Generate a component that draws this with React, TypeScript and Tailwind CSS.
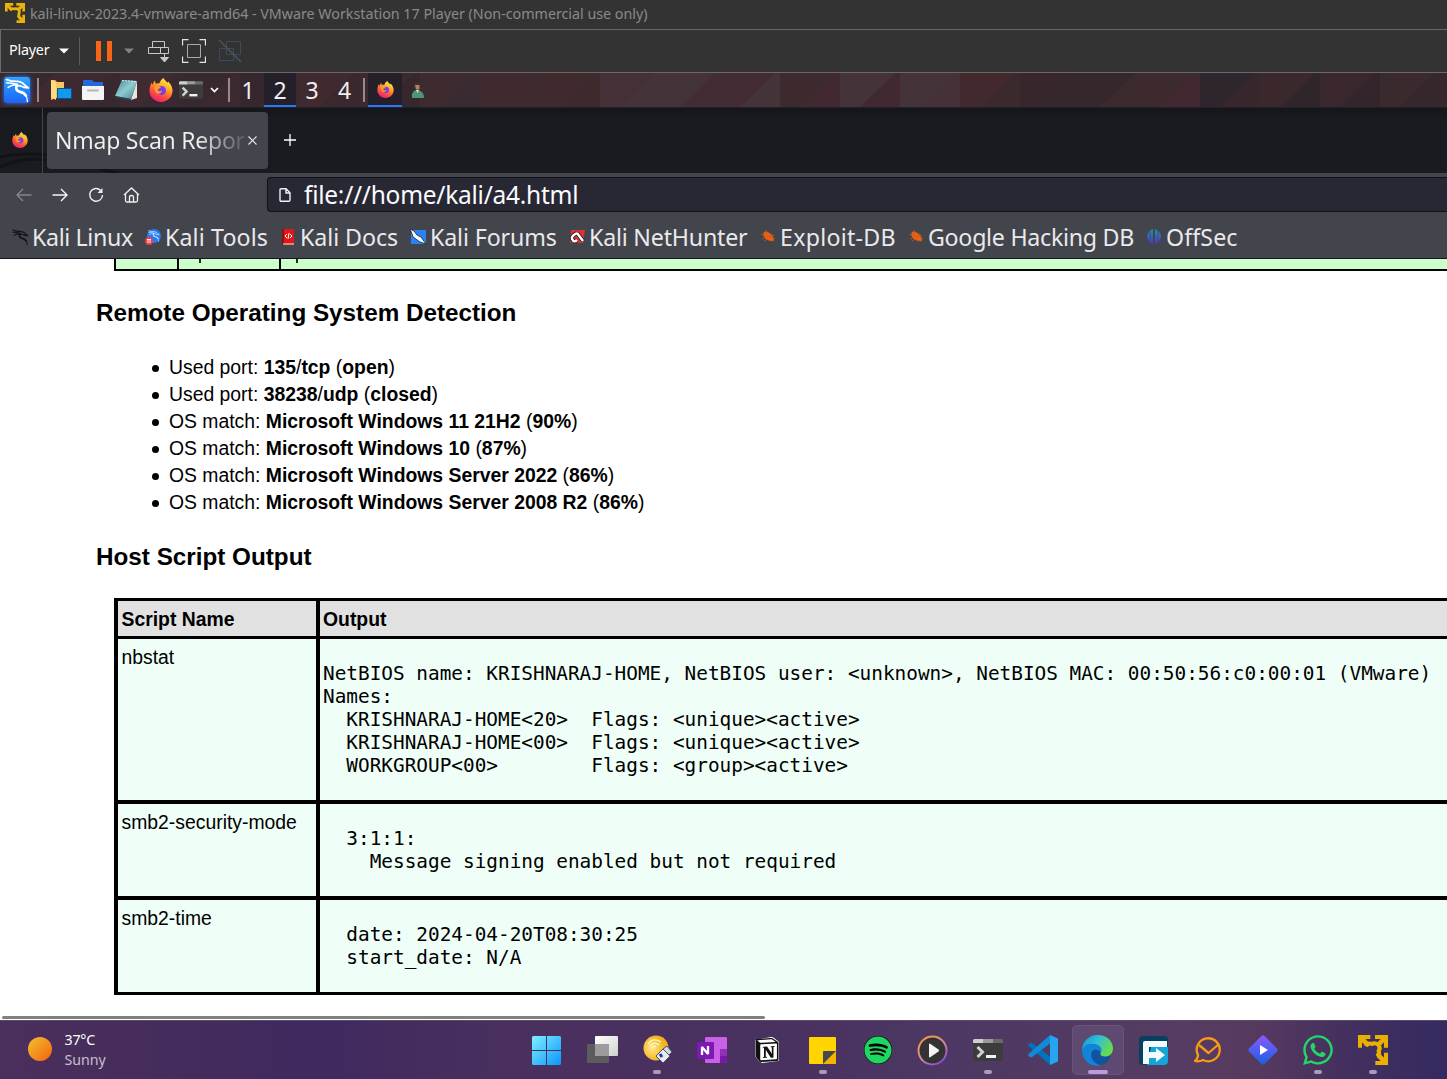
import React from "react";
import { SiNotion } from "react-icons/si";
import { FaSpotify, FaWhatsapp } from "react-icons/fa";

const UI = "font-['Noto_Sans',sans-serif]";
const SANS = "font-['Liberation_Sans',Arial,sans-serif]";

const stripes: [string, string][] = [
  ["#37282f", "#40292f"], ["#3d2a30", "#382930"], ["#3f2b31", "#3a2931"], ["#38282f", "#3d2930"],
  ["#35272d", "#3c2a30"], ["#402a30", "#39292f"], ["#3c2a30", "#36272e"], ["#3d2b30", "#3a2a32"],
  ["#40292f", "#3e2a2f"], ["#412a2e", "#3e292d"], ["#443036", "#443338"], ["#443338", "#432c33"],
  ["#432c33", "#443338"], ["#3c2a2f", "#422931"], ["#443338", "#422931"], ["#443338", "#453137"],
  ["#42292d", "#3b292d"], ["#37272d", "#36272d"], ["#36272d", "#3d2a2f"], ["#3d2a2f", "#422931"],
  ["#2f252d", "#37272d"], ["#3b282d", "#2f252a"], ["#3a272e", "#32262c"], ["#3a292d", "#35272c"],
  ["#38282d", "#38282d"],
];

function PanelBackdrop() {
  return (
    <svg className="absolute inset-0" width="1447" height="34" aria-hidden="true">
      {stripes.map(([a, b], i) => (
        <g key={i} transform={`translate(${i * 60} 0)`}>
          <rect width="60" height="34" fill={a} />
          <path d="M55 0H60V34H20Z" fill={b} />
        </g>
      ))}
    </svg>
  );
}

function Dragon({ size, color }: { size: number; color: string }) {
  return (
    <svg width={size} height={size} viewBox="0 0 24 24" fill="none" stroke={color} strokeLinecap="round" strokeLinejoin="round">
      <path d="M1.500 1.500Q7 3.500 12 3.300Q17 4 19 7L22.500 9.500L18 9Q15 7 11.500 7.500" strokeWidth="1.700" />
      <path d="M1.500 4.500Q7 4.500 11 6M3 9Q6.500 6.500 10.500 6.500" strokeWidth="1.500" />
      <path d="M11.500 6.500Q9 12 14.500 13.300Q18.500 14 20 17" strokeWidth="2.600" />
      <path d="M19.500 16Q21.500 18.500 21.500 22.500" strokeWidth="1.400" />
    </svg>
  );
}

function VmwareIcon({ size, color }: { size: number; color: string }) {
  return (
    <svg width={size} height={size} viewBox="0 0 90 90" fill="none" stroke={color} strokeWidth="12">
      <path d="M37 6H6V38M51 6H84V38M84 53V84H52" />
      <path d="M4 4L27 27M86 4L62 28M86 86L62 62" strokeWidth="14" />
      <path d="M24 34Q30 22 42 27Q50 22 60 29Q69 38 62 48Q66 58 56 64" strokeWidth="12" />
    </svg>
  );
}

function Firefox({ size }: { size: number }) {
  return (
    <svg width={size} height={size} viewBox="0 0 24 24">
      <defs>
        <linearGradient id="ffx" x1="0.8" y1="0" x2="0.3" y2="1">
          <stop offset="0" stopColor="#fff14a" />
          <stop offset="0.35" stopColor="#ffb02a" />
          <stop offset="0.65" stopColor="#ff5a32" />
          <stop offset="1" stopColor="#f0187a" />
        </linearGradient>
      </defs>
      <path d="M14.500 0c1.200 2.200 2.500 3 4 4.800l.8-1.300c3.200 3.400 4.200 6.500 4.200 9.300C23.500 19.300 18.300 24 12 24S.5 19.300.5 12.800C.5 9.500 1.500 6.500 2.800 4.400l.4 2.500C4.200 5.300 5 4 6 2.600l.6 3.200c1.400-.7 2.600-.8 3.800-.5C11.200 3.200 12.500 1 14.500 0Z" fill="url(#ffx)" />
      <circle cx="12.500" cy="12.500" r="4.500" fill="#7a3fe0" />
      <path d="M5.500 8.500c2.500-1.300 5-.6 6.500.8-1 1.400-3 1.300-3.500 2.700 1.200 2 3.300 1.300 4.500.3-.2 3-3.400 4.300-5.500 2.700C5.800 13.500 5.300 11 5.500 8.500Z" fill="#ff9a28" />
    </svg>
  );
}

function Terminal({ w, h }: { w: number; h: number }) {
  return (
    <svg width={w} height={h} viewBox="0 0 30 22">
      <path d="M0 1.500Q0 0 1.500 0H28.500Q30 0 30 1.500V20.500Q30 22 28.500 22H1.500Q0 22 0 20.500Z" fill="#3c3c3c" />
      <path d="M0 4V1.500Q0 0 1.500 0H10V4Z" fill="#cfcfcf" />
      <path d="M10 0H20V4H10Z" fill="#9b9b9b" />
      <path d="M20 0H28.500Q30 0 30 1.500V4H20Z" fill="#6b6b6b" />
      <path d="M4.500 8L9.500 13L4.500 18" fill="none" stroke="#d2d2d2" strokeWidth="3" />
      <path d="M13 16H23V19H13Z" fill="#f2f2f2" />
    </svg>
  );
}

function PlayerBar() {
  return (
    <div className="flex h-[44px] items-center border-y border-l border-[#696969] bg-[#333333] text-white">
      <span className={`${UI} mb-[2px] ml-2 w-[42px] text-[14.300px] tracking-[-0.2px]`}>Player</span>
      <svg className="ml-[8px]" width="10" height="6"><path d="M0 .5H10L5 5.500Z" fill="#fff" /></svg>
      <div className="ml-[10px] h-7 w-px bg-[#5a5a5a]" />
      <div className="ml-[16px] flex gap-[6px]">
        <div className="h-[20px] w-[5px] bg-[#fb6417]" />
        <div className="h-[20px] w-[5px] bg-[#fb6417]" />
      </div>
      <svg className="ml-[12px]" width="10" height="6"><path d="M0 .5H10L5 5.500Z" fill="#848484" /></svg>
      <svg className="ml-[14px]" width="22" height="23" fill="none" stroke="#c8c8c8">
        <path d="M4.500 1.500H16.500V7.500H4.500ZM.5 7.500H12.500V13.500H.5ZM12.500 7.500H20.500V13.500H12.500" />
        <path d="M16.500 14V21M12.500 17.500H20.500L16.500 22Z" fill="#c8c8c8" />
      </svg>
      <svg className="ml-[12px]" width="24" height="24" fill="none" stroke="#e5e5e5">
        <path d="M6.500 .5H.5V6.500M17.500 .5H23.500V6.500M6.500 23.500H.5V17.500M17.500 23.500H23.500V17.500" strokeWidth="1.300" />
        <path d="M5.500 5.500H18.500V18.500H5.500Z" stroke="#a9a9a9" />
      </svg>
      <svg className="ml-[12px]" width="24" height="24" fill="none" stroke="#3c4b58">
        <path d="M8.500 2.500H22.500V15.500H8.500ZM1.500 9.500H15.500V21.500H1.500Z" />
        <path d="M1 1L23 23" stroke="#475562" strokeWidth="1.500" />
      </svg>
    </div>
  );
}

function Separator({ cls }: { cls: string }) {
  return <div className={`h-6 w-[2px] shrink-0 bg-[#99898e] ${cls}`} />;
}

function KaliPanel() {
  return (
    <div className="relative h-[34px] overflow-hidden bg-[#3b2a31]">
      <PanelBackdrop />
      <div className="relative flex h-full items-center">
        <div className="ml-[4px] flex h-[26px] w-[26px] shrink-0 items-center justify-center rounded-[3px] bg-linear-to-b from-[#31a4ff] to-[#1f63f5] shadow-[0_0_4px_#2878ff]">
          <Dragon size={25} color="#fff" />
        </div>
        <Separator cls="ml-[7px]" />
        <svg className="ml-[12px] shrink-0" width="22" height="22">
          <path d="M0 1H4L6 3H13V19H5L0 21Z" fill="#f9c85d" />
          <path d="M0 1L5 4V21L0 18Z" fill="#ffdc83" />
          <path d="M6.500 9.500H20.500V19.500H6.500Z" fill="#1099ee" stroke="#075392" />
        </svg>
        <svg className="ml-[8px] shrink-0" width="24" height="22">
          <path d="M2 9V2Q2 1 3 1H11L13 3H21Q22 3 22 4V9Z" fill="#2669dc" />
          <path d="M1 7H23V20Q23 21 22 21H2Q1 21 1 20Z" fill="#f4f4f4" />
          <path d="M7 11.500H17" stroke="#b5b5b5" strokeWidth="2" strokeLinecap="round" />
        </svg>
        <svg className="ml-[9px] shrink-0" width="25" height="24">
          <defs><linearGradient id="note" x2="1" y2="1"><stop stopColor="#3f8894" /><stop offset=".5" stopColor="#90cbd2" /><stop offset="1" stopColor="#427f8c" /></linearGradient></defs>
          <path d="M8 2L23 3L17 21L1 18Z" fill="url(#note)" />
          <path d="M23 3V20L17 22Z" fill="#e6e6de" />
          <path d="M1 18L17 21V23L2 20Z" fill="#28444b" />
          <path d="M8 2.500L22 3.500" stroke="#d8ebe9" strokeDasharray="2 1" />
        </svg>
        <div className="ml-[10px] shrink-0"><Firefox size={24} /></div>
        <div className="ml-[6px] shrink-0"><Terminal w={24} h={18} /></div>
        <svg className="ml-[7px] shrink-0" width="9" height="6" fill="none" stroke="#fff" strokeWidth="1.700"><path d="M1 1L4.500 4.500L8 1" /></svg>
        <Separator cls="ml-[9px]" />
        <div className={`${UI} ml-[2px] flex h-full text-[23px] leading-[34px] text-[#f0eef0]`}>
          <span className="w-[32px] text-center">1</span>
          <span className="w-[32px] border-b-2 border-[#2777ff] bg-[#251f2a] text-center">2</span>
          <span className="w-[32px] text-center">3</span>
          <span className="w-[33px] text-center">4</span>
        </div>
        <Separator cls="ml-[2px]" />
        <div className="ml-[3px] flex h-full w-[34px] items-center justify-center border-b-2 border-[#2777ff] bg-[#251f2a]"><Firefox size={17} /></div>
        <svg className="ml-[9px]" width="14" height="17">
          <circle cx="6.500" cy="4" r="3.800" fill="#3b302b" /><path d="M4 3H8.500V7.500H5Z" fill="#b18161" />
          <path d="M1 16Q0 8 6.500 8Q13 9 13 16Z" fill="#519376" /><path d="M5 8H8L6.500 11Z" fill="#dce5df" />
        </svg>
      </div>
    </div>
  );
}

function TabBar() {
  return (
    <div className="relative flex h-[66px] border-t border-[#202227] bg-linear-to-b from-[#15161a] via-[#1a1b20] via-20% to-[#1a1b20]">
      <svg className="absolute bottom-0 left-0" width="120" height="22" fill="none" stroke="#121317" strokeWidth="3">
        <path d="M0 6Q25 1 46 4M0 16Q25 5 46 9M100 18L118 22" />
      </svg>
      <div className="relative flex w-[43px] items-center border-r border-[#44464c]">
        <div className="mb-[2px] ml-[12px]"><Firefox size={16} /></div>
      </div>
      <div className="relative ml-[4px] mt-[4px] flex h-[57px] w-[221px] items-center rounded-[4px] bg-[#43454c]">
        <span className={`${UI} mb-[2px] ml-[8px] w-[189px] whitespace-nowrap bg-linear-to-r from-[#f0f0f0] from-75% to-[#5a5c62] bg-clip-text text-[23px] leading-[36px] tracking-[-0.25px] text-transparent`}>Nmap Scan Repor</span>
        <svg className="ml-[4px]" width="9" height="9" stroke="#e8e8e8" strokeWidth="1.100"><path d="M.5 .5L8.500 8.500M8.500 .5L.5 8.500" /></svg>
      </div>
      <svg className="ml-[16px] mt-[26px]" width="12" height="12" stroke="#fff" strokeWidth="1.300"><path d="M6 0V12M0 6H12" /></svg>
    </div>
  );
}

function NavBar() {
  return (
    <div className="flex h-[43px] items-center bg-[#43454c]">
      <svg className="ml-[16px]" width="16" height="14" fill="none" stroke="#85878b" strokeWidth="1.300"><path d="M15.500 7H1.500M7 1L1 7L7 13" /></svg>
      <svg className="ml-[20px]" width="16" height="14" fill="none" stroke="#f5f5f5" strokeWidth="1.400"><path d="M.5 7H14.500M9 1L15 7L9 13" /></svg>
      <svg className="ml-[20px]" width="16" height="16" fill="none" stroke="#f0f0f0" strokeWidth="1.400"><path d="M12.500 3.200A6.400 6.400 0 1 0 14.500 8" /><path d="M14.500 1V6H9.500Z" fill="#f0f0f0" stroke="none" /></svg>
      <svg className="ml-[19px]" width="17" height="16" fill="none" stroke="#f0f0f0" strokeWidth="1.300"><path d="M1 8L8.500 1L16 8M2.500 7V13.500Q2.500 15 4 15H13Q14.500 15 14.500 13.500V7M6.500 15V10Q6.500 8.500 8.500 8.500T10.500 10V15" /></svg>
      <div className="ml-[127px] flex h-[35px] flex-1 items-center rounded-l-[4px] border border-r-0 border-[#101117] bg-[#272834]">
        <svg className="ml-[11px]" width="12" height="14" fill="none" stroke="#f0f0f0" strokeWidth="1.400"><path d="M1 2Q1 .8 2.200 .8H7L11 4.800V12Q11 13.200 9.800 13.200H2.200Q1 13.200 1 12ZM7 1V5H11" /></svg>
        <span className={`${UI} ml-[13px] whitespace-nowrap text-[24.500px] leading-[33px] tracking-[-0.26px] text-[#fbfbfe]`}>file:///home/kali/a4.html</span>
      </div>
    </div>
  );
}

function Bug() {
  return (
    <svg width="16" height="16" fill="#ec6213" stroke="#d45a18" strokeWidth=".7">
      <path d="M4 3Q9 2 13 8L13.500 12Q8 12 5 9Q3 7 4 3Z" /><path d="M1 5L15 10M2 10L12 5M6 1L7 6M4 12L9 9M14 6L9 8" fill="none" />
    </svg>
  );
}

const bookmarks: { label: string; gap: string; text: string; icon: React.ReactNode }[] = [
  { label: "Kali Linux", gap: "ml-[12px]", text: "w-[101px] tracking-[-0.36px]", icon: <Dragon size={17} color="#131416" /> },
  {
    label: "Kali Tools", gap: "ml-[12px]", text: "w-[103px] tracking-[0.13px]",
    icon: <span className="relative block h-4 w-4"><span className="ml-[2px] flex h-[14px] w-[14px] items-center justify-center rounded-full bg-[#267bf4]"><Dragon size={12} color="#b8dcff" /></span><svg className="absolute bottom-0 left-0" width="8" height="8"><circle cx="4" cy="4" r="4" fill="#f23c42" /><path d="M2 2.500H6M3 3V6M5 3V6" stroke="#fff" /></svg></span>,
  },
  { label: "Kali Docs", gap: "ml-[12px]", text: "w-[97px] tracking-[-0.05px]", icon: <svg width="16" height="16"><path d="M2 0H14V16H2Z" fill="#de1719" /><path d="M2 0H4V16H2Z" fill="#8e1114" /><path d="M3 15H14" stroke="#eee" /><path d="M7 5L5 7L7 9M10 5L12 7L10 9M9 4L8 10" fill="none" stroke="#fff" /></svg> },
  { label: "Kali Forums", gap: "ml-[13px]", text: "w-[127px] tracking-[-0.12px]", icon: <svg width="16" height="16"><path d="M1 1H16V15H1Z" fill="#2882f8" /><path d="M0 0L4 2L7 6L11 8L16 15L10 13L3 8L2 5Z" fill="#f6f6f6" stroke="#17212e" strokeWidth=".8" /></svg> },
  { label: "Kali NetHunter", gap: "ml-[12px]", text: "w-[159px] tracking-[-0.2px]", icon: <svg width="16" height="16"><path d="M2 1H16L14 14H1Z" fill="#df3035" /><path d="M8 4Q2 7 3 10Q5 14 8 11M8 4L14 12" fill="none" stroke="#17181b" strokeWidth="4" /><path d="M8 4Q2 7 3 10Q5 14 8 11M8 4L14 12" fill="none" stroke="#fff" strokeWidth="2.500" /></svg> },
  { label: "Exploit-DB", gap: "ml-[12px]", text: "w-[117px] tracking-[0.25px]", icon: <Bug /> },
  { label: "Google Hacking DB", gap: "ml-[11px]", text: "w-[208px] tracking-[-0.27px]", icon: <Bug /> },
  { label: "OffSec", gap: "ml-[10px]", text: "w-[80px] tracking-[0.1px]", icon: <svg width="16" height="16"><defs><linearGradient id="ofs" y2="1" x2="0"><stop stopColor="#19989f" /><stop offset="1" stopColor="#5631cf" /></linearGradient></defs><path d="M7 0V15Q1 12 1 7Q2 2 7 0ZM9 0Q15 3 15 8Q14 13 9 15Z" fill="url(#ofs)" /><path d="M4 2V12M12 2V12" stroke="#43454c" strokeWidth=".7" /></svg> },
];

function BookmarksBar() {
  return (
    <div className="flex h-[43px] items-start overflow-hidden border-b border-[#15161a] bg-[#43454c]">
      {bookmarks.map((b) => (
        <div key={b.label} className={`flex h-[42px] shrink-0 items-center ${b.gap}`}>
          <div className="w-4 shrink-0">{b.icon}</div>
          <span className={`${UI} ${b.text} ml-[4px] whitespace-nowrap text-[23.200px] leading-[40px] text-[#e9e9eb]`}>{b.label}</span>
        </div>
      ))}
    </div>
  );
}

const osFacts = [
  ["Used port: ", "135/tcp", "open"],
  ["Used port: ", "38238/udp", "closed"],
  ["OS match: ", "Microsoft Windows 11 21H2", "90%"],
  ["OS match: ", "Microsoft Windows 10", "87%"],
  ["OS match: ", "Microsoft Windows Server 2022", "86%"],
  ["OS match: ", "Microsoft Windows Server 2008 R2", "86%"],
];

const scripts = [
  {
    name: "nbstat", height: "h-[165px]", border: "border-b-4",
    output: `NetBIOS name: KRISHNARAJ-HOME, NetBIOS user: <unknown>, NetBIOS MAC: 00:50:56:c0:00:01 (VMware)
Names:
  KRISHNARAJ-HOME<20>  Flags: <unique><active>
  KRISHNARAJ-HOME<00>  Flags: <unique><active>
  WORKGROUP<00>        Flags: <group><active>`,
  },
  { name: "smb2-security-mode", height: "h-[96px]", border: "border-b-4", output: "  3:1:1:\n    Message signing enabled but not required" },
  { name: "smb2-time", height: "h-[95px]", border: "border-b-[3px]", output: "  date: 2024-04-20T08:30:25\n  start_date: N/A" },
];

function Report() {
  return (
    <div className={`${SANS} flex h-[761px] flex-col overflow-hidden bg-white text-[19.380px] text-black`}>
      <div className="ml-[114px] flex h-[12px] shrink-0 border-b-2 border-l-2 border-black bg-[#ccffcc]">
        <div className="w-[63px] border-r-2 border-black" />
        <div className="w-[102px] border-r-2 border-black pl-[20px]"><div className="h-[4px] w-[2px] bg-[#24301f]" /></div>
        <div className="pl-[15px]"><div className="h-[4px] w-[2px] bg-[#24301f]" /></div>
      </div>
      <h2 className="ml-[96px] mt-[27px] text-[24.250px] font-bold leading-[30px]">Remote Operating System Detection</h2>
      <ul className="ml-[152px] mt-[26px]">
        {osFacts.map(([label, value, note]) => {
          const [head, tail] = value.split("/");
          return (
            <li key={value} className="flex h-[27px] items-center whitespace-pre">
              <span className="mr-[10px] mt-[2px] h-[7px] w-[7px] rounded-full bg-black" />
              <span>{label}<b>{head}</b>{tail && <>/<b>{tail}</b></>} (<b>{note}</b>)</span>
            </li>
          );
        })}
      </ul>
      <h2 className="ml-[96px] mt-[26px] text-[24.250px] font-bold leading-[30px]">Host Script Output</h2>
      <div className="ml-[114px] mt-[26px] border-l-4 border-t-[3px] border-black">
        <div className="flex h-[38px] border-b-[3px] border-black bg-[#e1e1e1] font-bold leading-[37px]">
          <div className="w-[202px] shrink-0 border-r-4 border-black pl-[3.500px]">Script Name</div>
          <div className="pl-[3px]">Output</div>
        </div>
        {scripts.map((s) => (
          <div key={s.name} className={`flex border-black bg-[#effff7] ${s.height} ${s.border}`}>
            <div className="w-[202px] shrink-0 border-r-4 border-black pl-[3.500px] pt-[5px] leading-[27px]">{s.name}</div>
            <pre className="pl-[3px] pt-[23px] font-['DejaVu_Sans_Mono',monospace] text-[19.390px] leading-[23px]">{s.output}</pre>
          </div>
        ))}
      </div>
      <div className="ml-[2px] mt-[21px] h-[3px] w-[763px] shrink-0 rounded-full bg-[#7d8281]" />
    </div>
  );
}

const apps: { name: string; mark?: "dot" | "active"; icon: React.ReactNode }[] = [
  { name: "Start", icon: <svg width="30" height="30"><defs><linearGradient id="win" x2="1" y2="1"><stop stopColor="#7cf0ff" /><stop offset="1" stopColor="#0d95fb" /></linearGradient></defs><path d="M1 1H14V15H0V2ZM15 1H28L29 2V15H15ZM0 16H14V30H1L0 29ZM15 16H29V29L28 30H15Z" fill="url(#win)" /></svg> },
  { name: "Task View", icon: <svg width="32" height="30"><defs><linearGradient id="tv" x2="1" y2="1"><stop stopColor="#fff" /><stop offset="1" stopColor="#d0d0d0" /></linearGradient></defs><rect x="1" y="9" width="22" height="19" rx="1" fill="#5c5b5d" /><rect x="9" y="1" width="23" height="20" rx="1" fill="url(#tv)" /><path d="M9 9H23V21H10L9 20Z" fill="#9d9b9e" /></svg> },
  { name: "Rufus", mark: "dot", icon: <svg width="30" height="30"><defs><radialGradient id="ruf" cx=".35" cy=".5"><stop stopColor="#ffe98c" /><stop offset="1" stopColor="#f2b41b" /></radialGradient></defs><circle cx="14" cy="13" r="12.500" fill="url(#ruf)" /><path d="M6 9Q11 2 19 7M8 11Q12 6 17 10M10 13Q12 10 14 12" fill="none" stroke="#fff5cc" strokeWidth="1.300" /><path d="M14 21L21 14L28 21L21 28Z" fill="#e8ebf0" stroke="#47516b" /><path d="M21 14L25 11L30 17L27 20Z" fill="#d4d8df" stroke="#47516b" /><path d="M18 19L20 22" stroke="#2638a7" strokeWidth="3" /></svg> },
  { name: "OneNote", icon: <svg width="30" height="30"><rect x="8" y="2" width="22" height="26" rx="1" fill="#c861e6" /><path d="M23 14H30V21H23Z" fill="#9131b9" /><path d="M23 21H30V27L29 28H23Z" fill="#7719aa" /><rect y="7" width="17" height="17" rx="1" fill="#7c18b4" /><path d="M5 20V12L11 19V11" fill="none" stroke="#fff" strokeWidth="2.300" strokeLinejoin="bevel" /></svg> },
  { name: "Notion", icon: <svg width="26" height="28" viewBox="0 0 26 28"><path d="M1 4L17 1Q19 1 20 2L25 6V24Q25 25 24 25L8 27L5 25L1 20Z" fill="#fff" /><g transform="translate(1 2)"><SiNotion size={24} color="#111" /></g></svg> },
  { name: "Sticky Notes", mark: "dot", icon: <svg width="27" height="27"><rect width="27" height="27" rx="1" fill="#ffd400" /><path d="M14 14H27V27H14Z" fill="#f5b300" /><path d="M14 27V15Q14 14 15 14H27Z" fill="#484848" /></svg> },
  { name: "Spotify", icon: <span className="flex rounded-full bg-black"><FaSpotify size={28} color="#1ed760" /></span> },
  { name: "Media Player", icon: <svg width="31" height="31"><defs><linearGradient id="mp" x2=".7" y2="1"><stop stopColor="#ff9c35" /><stop offset=".6" stopColor="#d28a9a" /><stop offset="1" stopColor="#8d4bd0" /></linearGradient></defs><circle cx="15.500" cy="15.500" r="14" fill="#333335" stroke="url(#mp)" strokeWidth="2" /><path d="M12 9.500Q12 8 13.500 9L21.500 14.500Q22.500 15.500 21.500 16.500L13.500 22Q12 23 12 21.500Z" fill="#f4f4f4" /></svg> },
  { name: "Terminal", mark: "dot", icon: <Terminal w={30} h={22} /> },
  { name: "VS Code", icon: <svg width="30" height="30" viewBox="0 0 30 30"><path d="M1 8.500L3.500 7.500L22 21.500V30L.5 11Q-.3 9.800 1 8.500Z" fill="#0073bd" /><path d="M1 21.500L3.500 22.500L22 8.500V0L.5 19Q-.3 20.200 1 21.500Z" fill="#0f8bd9" /><path d="M22 0L30 3.500V26.500L22 30Z" fill="#26a5ef" /></svg> },
  { name: "Edge", mark: "active", icon: <svg width="31" height="31" viewBox="0 0 30 30"><defs><linearGradient id="ed1" x2="1" y2=".5"><stop stopColor="#1493d7" /><stop offset=".5" stopColor="#30bfd6" /><stop offset="1" stopColor="#69dc4c" /></linearGradient></defs><path d="M15 0C24 0 30 6 30 13C30 18 26 21 22 21C18 21 17 19 18 17C20 15 18 10 12 9C6 8 1 12 0 15C0 6 7 0 15 0Z" fill="url(#ed1)" /><path d="M0 15C1 10 7 7 13 9C18 10 20 14 18 17C16 14 11 15 11 20C11 25 15 29 19 29C8 32 0 24 0 15Z" fill="#1184d9" /><path d="M9 18C10 13 15 13 18 17C17 19 18 21 22 21C25 21 27 20 28 20C26 26 21 29 18 29C12 28 8 23 9 18Z" fill="#11539d" /></svg> },
  { name: "Downloader", icon: <svg width="29" height="29"><rect width="29" height="29" rx="4" fill="#07415f" /><path d="M12 11H29V25Q29 29 25 29H8Z" fill="#13a5d8" /><path d="M4 28V7Q4 5 6 5H28V11H10V16H17V12L26 19L17 26V22H10V28Z" fill="#f4fbff" /></svg> },
  { name: "eM Client", icon: <svg width="28" height="27" fill="none" stroke="#f99a17" strokeWidth="2.300" strokeLinejoin="round"><path d="M4 18A11.500 11.500 0 1 1 9 23Q5 25 1 24Q4 22 4 18Z" /><path d="M5 8L14.500 16L25 7" /></svg> },
  { name: "Streamer", icon: <svg width="30" height="30"><defs><linearGradient id="st" x2="0" y2="1"><stop stopColor="#8a5aff" /><stop offset="1" stopColor="#1660df" /></linearGradient></defs><path d="M13.500 1Q15 -.5 16.500 1L29 13.500Q30.500 15 29 16.500L16.500 29Q15 30.500 13.500 29L1 16.500Q-.5 15 1 13.500Z" fill="url(#st)" /><path d="M12 10L20 15L12 20Z" fill="#fff" /></svg> },
  { name: "WhatsApp", mark: "dot", icon: <FaWhatsapp size={34} color="#25d366" /> },
  { name: "VMware", mark: "dot", icon: <VmwareIcon size={30} color="#e8b000" /> },
];

function Taskbar() {
  return (
    <div className="relative flex h-[59px] border-t border-[#5a4b67] bg-[linear-gradient(90deg,#4b2f5c_0%,#442c5c_12%,#40295f_22%,#49305e_36%,#493160_55%,#4c3863_65%,#563c62_82%,#57395f_87%,#43305f_93%,#352a60_100%)]">
      <div className={`${UI} flex w-[519.500px] items-start pt-[8px]`}>
        <div className="ml-[28px] mt-[8px] h-[24px] w-[24px] rounded-full bg-linear-to-br from-[#efbf30] to-[#f2600d]" />
        <div className="ml-[12.500px] mt-px text-[14.200px] leading-[20px] tracking-[-0.05px]">
          <div className="tracking-[-0.2px] text-white">37°C</div>
          <div className="text-[#c9bfd0]">Sunny</div>
        </div>
      </div>
      {apps.map((a) => (
        <div key={a.name} className="relative flex h-[58px] w-[55.100px] shrink-0 items-center justify-center">
          {a.mark === "active" && <div className="absolute inset-x-[2px] top-[4px] h-[50px] rounded-[5px] border border-[#69547a] bg-[#5e4a70]" />}
          <div className="relative">{a.icon}</div>
          {a.mark === "dot" && <div className="absolute bottom-[5px] h-[4px] w-[8px] rounded-full bg-[#ac9cb3]" />}
          {a.mark === "active" && <div className="absolute bottom-[5px] h-[4px] w-[20px] rounded-full bg-[#be9ade]" />}
        </div>
      ))}
    </div>
  );
}

export default function App() {
  return (
    <div className="flex h-[1079px] w-[1447px] flex-col overflow-hidden bg-white">
      <div className="flex h-[29px] items-center bg-[#333333]">
        <div className="mb-[3px] ml-[5px]"><VmwareIcon size={20} color="#eab308" /></div>
        <span className={`${UI} mb-[1px] ml-[5px] whitespace-nowrap text-[14.300px] tracking-[-0.02px] text-[#8a8a8a]`}>kali-linux-2023.4-vmware-amd64 - VMware Workstation 17 Player (Non-commercial use only)</span>
      </div>
      <PlayerBar />
      <KaliPanel />
      <TabBar />
      <NavBar />
      <BookmarksBar />
      <Report />
      <Taskbar />
    </div>
  );
}
